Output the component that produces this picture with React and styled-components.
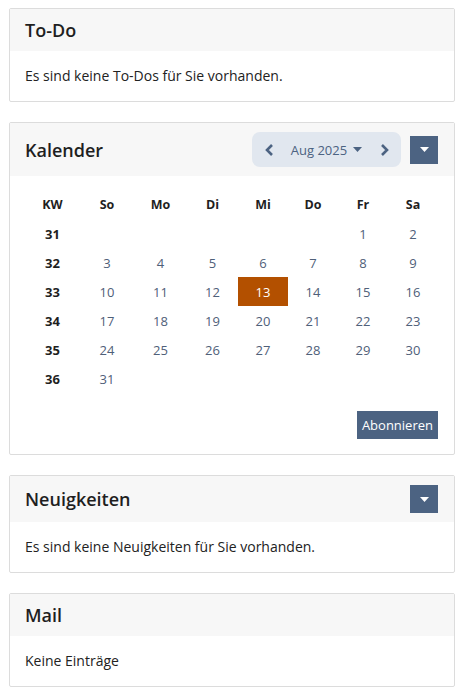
import React from "react"
import styled, { createGlobalStyle } from "styled-components"

const GlobalStyle = createGlobalStyle`
body{
  margin: 0;
  background: #fff;
  font-family: "Open Sans", "Noto Sans", sans-serif;
  color: #222;
}
`

const weeks = [
  { kw: 31, days: [null, null, null, null, null, 1, 2] },
  { kw: 32, days: [3, 4, 5, 6, 7, 8, 9] },
  { kw: 33, days: [10, 11, 12, 13, 14, 15, 16] },
  { kw: 34, days: [17, 18, 19, 20, 21, 22, 23] },
  { kw: 35, days: [24, 25, 26, 27, 28, 29, 30] },
  { kw: 36, days: [31, null, null, null, null, null, null] },
]
const dayNames = ["So", "Mo", "Di", "Mi", "Do", "Fr", "Sa"]

const Caret = ({ color }) => (
  <svg width="9" height="5" viewBox="0 0 9 5">
    <path d="M0 0h9L4.5 5z" fill={color} />
  </svg>
)

const Chevron = ({ left }) => (
  <svg width="9" height="12" viewBox="0 0 9 12">
    <path
      d={left ? "M7 1L2 6l5 5" : "M2 1l5 5-5 5"}
      fill="none"
      stroke="#4c6382"
      strokeWidth="2.6"
    />
  </svg>
)

const Panel = ({ title, action, children, flush }) => (
  <Card>
    <Header>
      <Title>{title}</Title>
      {action}
    </Header>
    <Body flush={flush}>{children}</Body>
  </Card>
)

const MenuButton = () => (
  <DropButton>
    <Caret color="#fff" />
  </DropButton>
)

const App = () => {
  return (
    <Page>
      <GlobalStyle />
      <Panel title="To-Do">Es sind keine To-Dos für Sie vorhanden.</Panel>

      <Panel
        title="Kalender"
        flush
        action={
          <Tools>
            <MonthNav>
              <NavButton><Chevron left /></NavButton>
              <MonthLabel>
                Aug 2025 <Caret color="#4c6382" />
              </MonthLabel>
              <NavButton><Chevron /></NavButton>
            </MonthNav>
            <MenuButton />
          </Tools>
        }
      >
        <Grid>
          <HeadCell>KW</HeadCell>
          {dayNames.map((d) => (
            <HeadCell key={d}>{d}</HeadCell>
          ))}
          {weeks.map((w) => (
            <React.Fragment key={w.kw}>
              <WeekCell>{w.kw}</WeekCell>
              {w.days.map((d, i) => (
                <DayCell key={i} today={d === 13}>
                  {d}
                </DayCell>
              ))}
            </React.Fragment>
          ))}
        </Grid>
        <Footer>
          <SubscribeButton>Abonnieren</SubscribeButton>
        </Footer>
      </Panel>

      <Panel title="Neuigkeiten" action={<MenuButton />}>
        Es sind keine Neuigkeiten für Sie vorhanden.
      </Panel>

      <Panel title="Mail">Keine Einträge</Panel>
    </Page>
  )
}
export default App

const Page = styled.div`
width: 446px;
padding: 8px 8px 8px 9px;
display: flex;
flex-direction: column;
gap: 20px;
`
const Card = styled.div`
border: 1px solid #dcdcdc;
border-radius: 2px;
background: #fff;
`
const Header = styled.div`
display: flex;
align-items: center;
justify-content: space-between;
min-height: 24px;
padding: 9px 16px 9px 15px;
background: #f7f7f7;
`
const Title = styled.div`
font-size: 18px;
font-weight: 600;
line-height: 24px;
color: #1f1f1f;
`
const Body = styled.div`
padding: ${({ flush }) => (flush ? "15px 16px 15px 15px" : "15px 15px 15px")};
font-size: 14px;
line-height: 20px;
color: #222;
`
const Tools = styled.div`
display: flex;
align-items: center;
gap: 9px;
`
const MonthNav = styled.div`
display: flex;
align-items: center;
justify-content: space-between;
width: 149px;
height: 35px;
border-radius: 8px;
background: #e1e7ef;
`
const NavButton = styled.div`
width: 34px;
height: 35px;
display: flex;
align-items: center;
justify-content: center;
`
const MonthLabel = styled.div`
display: flex;
align-items: center;
gap: 6px;
font-size: 13px;
color: #4c6382;
`
const DropButton = styled.div`
width: 28px;
height: 28px;
display: flex;
align-items: center;
justify-content: center;
background: #4c6382;
`
const Grid = styled.div`
display: grid;
grid-template-columns: 55px 54px 53px 51px 50px 50px 50px 50px;
grid-template-rows: 28px repeat(6, 29px);
`
const HeadCell = styled.div`
display: flex;
align-items: center;
justify-content: center;
font-size: 12.5px;
font-weight: 700;
color: #1f1f1f;
`
const WeekCell = styled(HeadCell)`
font-size: 13px;
`
const DayCell = styled.div`
display: flex;
align-items: center;
justify-content: center;
font-size: 13px;
color: ${({ today }) => (today ? "#fff" : "#4f6079")};
background: ${({ today }) => (today ? "#b35000" : "transparent")};
`
const Footer = styled.div`
display: flex;
justify-content: flex-end;
margin-top: 18px;
`
const SubscribeButton = styled.div`
height: 28px;
padding: 0 5px;
display: flex;
align-items: center;
background: #4c6382;
color: #fff;
font-size: 13px;
`
